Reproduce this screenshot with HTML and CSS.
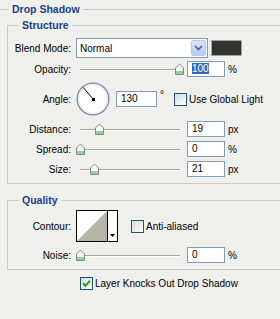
FILE: index.html
```html
<!doctype html>
<html lang="en">
<head>
  <meta charset="UTF-8" />
  <title>Drop Shadow</title>
  <link rel="stylesheet" href="styles.css">
</head>
<body>
<div class="panel">
  <fieldset class="outer">
    <legend>Drop Shadow</legend>

    <fieldset class="group structure">
      <legend>Structure</legend>

      <div class="row row-blend">
        <span class="label">Blend Mode:</span>
        <div class="select">
          <span class="select-text">Normal</span>
          <span class="select-btn">
            <svg width="9" height="6" viewBox="0 0 9 6"><path d="M1 1L4.5 4.5L8 1" fill="none" stroke="#4d6185" stroke-width="1.6"/></svg>
          </span>
        </div>
        <span class="swatch"></span>
      </div>

      <div class="row row-opacity">
        <span class="label">Opacity:</span>
        <div class="slider">
          <div class="track"></div>
          <svg class="thumb" style="left: 99px" width="9" height="12" viewBox="0 0 9 12"><path d="M0.5 11.5V5L4.5 1L8.5 5V11.5Z" fill="#fff" stroke="#7d8a7d"/><rect x="1" y="8" width="7" height="3" fill="#93d393"/></svg>
        </div>
        <span class="field"><span class="selected">100</span></span>
        <span class="unit">%</span>
      </div>

      <div class="row row-angle">
        <span class="label">Angle:</span>
        <svg class="dial" width="34" height="34" viewBox="0 0 34 34">
          <circle cx="17" cy="17" r="15.8" fill="#fff" stroke="#7c86a4" stroke-width="1.3"/>
          <circle cx="17" cy="17" r="14.6" fill="none" stroke="#e4e6ee" stroke-width="1"/>
          <line x1="17" y1="17" x2="7.3" y2="5.5" stroke="#000" stroke-width="1"/>
          <rect x="16" y="16" width="3" height="3" fill="#000"/>
        </svg>
        <span class="field field-angle">130</span>
        <span class="deg">°</span>
        <span class="check"></span>
        <span class="check-text">Use Global Light</span>
      </div>

      <div class="row row-slider">
        <span class="label">Distance:</span>
        <div class="slider">
          <div class="track"></div>
          <svg class="thumb" style="left: 19px" width="9" height="12" viewBox="0 0 9 12"><path d="M0.5 11.5V5L4.5 1L8.5 5V11.5Z" fill="#fff" stroke="#7d8a7d"/><rect x="1" y="8" width="7" height="3" fill="#93d393"/></svg>
        </div>
        <span class="field">19</span>
        <span class="unit">px</span>
      </div>

      <div class="row row-slider">
        <span class="label">Spread:</span>
        <div class="slider">
          <div class="track"></div>
          <svg class="thumb" style="left: 0px" width="9" height="12" viewBox="0 0 9 12"><path d="M0.5 11.5V5L4.5 1L8.5 5V11.5Z" fill="#fff" stroke="#7d8a7d"/><rect x="1" y="8" width="7" height="3" fill="#93d393"/></svg>
        </div>
        <span class="field">0</span>
        <span class="unit">%</span>
      </div>

      <div class="row row-slider">
        <span class="label">Size:</span>
        <div class="slider">
          <div class="track"></div>
          <svg class="thumb" style="left: 14px" width="9" height="12" viewBox="0 0 9 12"><path d="M0.5 11.5V5L4.5 1L8.5 5V11.5Z" fill="#fff" stroke="#7d8a7d"/><rect x="1" y="8" width="7" height="3" fill="#93d393"/></svg>
        </div>
        <span class="field">21</span>
        <span class="unit">px</span>
      </div>
    </fieldset>

    <fieldset class="group quality">
      <legend>Quality</legend>

      <div class="row row-contour">
        <span class="label">Contour:</span>
        <svg class="contour" width="42" height="32" viewBox="0 0 42 32">
          <rect x="0.5" y="0.5" width="41" height="31" fill="#fff" stroke="#000"/>
          <polygon points="1,31 31,1 31,31" fill="#b6b2a5"/>
          <line x1="31.5" y1="0" x2="31.5" y2="32" stroke="#000"/>
          <polygon points="34,24 39,24 36.5,27" fill="#000"/>
        </svg>
        <span class="check check-aa"></span>
        <span class="check-text">Anti-aliased</span>
      </div>

      <div class="row row-noise">
        <span class="label">Noise:</span>
        <div class="slider">
          <div class="track"></div>
          <svg class="thumb" style="left: 0px" width="9" height="12" viewBox="0 0 9 12"><path d="M0.5 11.5V5L4.5 1L8.5 5V11.5Z" fill="#fff" stroke="#7d8a7d"/><rect x="1" y="8" width="7" height="3" fill="#93d393"/></svg>
        </div>
        <span class="field">0</span>
        <span class="unit">%</span>
      </div>
    </fieldset>

    <div class="row row-knock">
      <span class="check checked">
        <svg width="11" height="11" viewBox="0 0 11 11"><path d="M2 5.2L4.4 7.8L9 2.6" fill="none" stroke="#21a121" stroke-width="2"/></svg>
      </span>
      <span class="check-text">Layer Knocks Out Drop Shadow</span>
    </div>
  </fieldset>
</div>
</body>
</html>
```

FILE: styles.css
```css
body {
  margin: 0;
  width: 280px;
  height: 319px;
  overflow: hidden;
  background-color: #efefec;
  font-family: "Liberation Sans", Arial, sans-serif;
  font-size: 10px;
  color: #000;
}
.panel {
  padding-top: 3px;
}
fieldset {
  margin: 0;
  padding: 0;
  min-width: 0;
  border: 1px solid #c9c9c3;
  border-right: none;
}
legend {
  padding: 0 3px;
  font-size: 10.5px;
  font-weight: bold;
  line-height: 13px;
  color: #16418f;
}
.outer {
  border-left: none;
  border-bottom: none;
}
.outer > legend {
  margin-left: 9px;
}
.group {
  margin-left: 7px;
  padding-bottom: 6px;
}
.group > legend {
  margin-left: 11px;
}
.structure {
  margin-top: 3px;
}
.quality {
  margin-top: 10px;
}
.row {
  display: flex;
  align-items: center;
  height: 16px;
  margin-top: 4px;
}
.row-blend {
  height: 20px;
  margin-top: 6px;
}
.row-opacity {
  margin-top: 3px;
}
.row-angle {
  height: 34px;
  margin-top: 5px;
}
.row-angle + .row-slider {
  margin-top: 5px;
}
.row-contour {
  height: 32px;
  margin-top: 3px;
}
.row-noise {
  margin-top: 5px;
}
.row-knock {
  height: 13px;
  margin-top: 7px;
  padding-left: 80px;
}
.label {
  flex: none;
  width: 63px;
  margin-right: 5px;
  text-align: right;
}
.select {
  box-sizing: border-box;
  display: flex;
  align-items: center;
  width: 132px;
  height: 20px;
  border: 1px solid #7f9db9;
  background-color: #fff;
}
.select-text {
  padding-left: 3px;
}
.select-btn {
  box-sizing: border-box;
  display: flex;
  align-items: center;
  justify-content: center;
  width: 15px;
  height: 16px;
  margin-left: auto;
  margin-right: 1px;
  border: 1px solid #b5c7f1;
  border-radius: 2px;
  background: linear-gradient(#d9e4fc, #b9cbf6);
}
.swatch {
  box-sizing: border-box;
  width: 31px;
  height: 16px;
  margin-left: 3px;
  border: 1px solid #a3a3a0;
  background-color: #30332f;
}
.slider {
  position: relative;
  flex: none;
  width: 108px;
  height: 16px;
}
.track {
  height: 1px;
  margin: 8px 4px 0 4px;
  background-color: #a3a3a3;
  border-bottom: 1px solid #fff;
}
.thumb {
  position: absolute;
  top: 2px;
}
.field {
  box-sizing: border-box;
  flex: none;
  width: 38px;
  height: 16px;
  margin-left: 3px;
  padding-left: 4px;
  border: 1px solid #7f9db9;
  background-color: #fff;
  line-height: 14px;
}
.selected {
  background-color: #316ac5;
  color: #fff;
}
.unit {
  margin-left: 3px;
}
.dial {
  flex: none;
}
.field-angle {
  width: 41px;
  margin-left: 6px;
}
.deg {
  width: 14px;
  margin-left: 3px;
  align-self: flex-start;
  margin-top: 7px;
}
.check {
  box-sizing: border-box;
  display: flex;
  align-items: center;
  justify-content: center;
  flex: none;
  width: 13px;
  height: 13px;
  border: 1px solid #1c5180;
  background: linear-gradient(135deg, #dcdcd5, #fbfbf9);
}
.check-aa {
  margin-left: 13px;
}
.check-text {
  margin-left: 2px;
  white-space: nowrap;
}
.contour {
  flex: none;
}
```
